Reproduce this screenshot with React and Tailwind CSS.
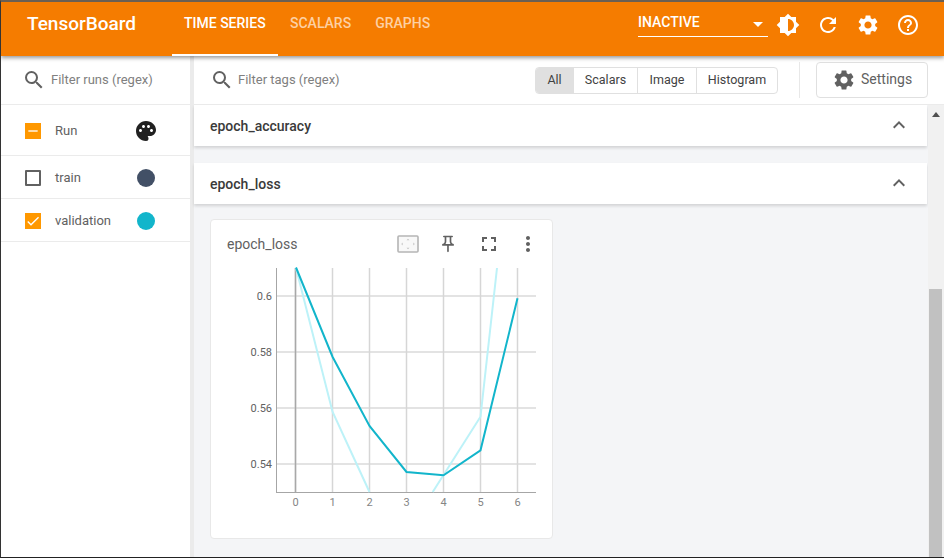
import React from "react";
import {
  MdSearch, MdSettings, MdRefresh, MdHelpOutline, MdBrightness6, MdPalette, MdExpandLess,
  MdOutlinePushPin, MdFullscreen, MdMoreVert, MdCheck, MdRemove,
} from "react-icons/md";

const Row = ({ h, box, label, right }) => (
  <div className={`flex items-center pl-[24px] pt-[2px] ${h} border-b border-[#ebebeb]`}>
    {box}
    <span className="ml-[14px] w-[82px] text-[13px] text-[#616161]">{label}</span>
    {right}
  </div>
);

const Seg = ({ w, active, children, last }) => (
  <div
    className={`flex items-center justify-center h-full text-[12.5px] text-[#424242] ${w} ${active ? "bg-[#e0e0e0]" : ""} ${last ? "" : "border-r border-[#e0e0e0]"}`}
  >
    {children}
  </div>
);

const Section = ({ title, className }) => (
  <div className={`flex items-center justify-between h-[41px] bg-white pl-[16px] pr-[16px] shadow-[0_2px_3px_rgba(0,0,0,0.14)] ${className}`}>
    <span className="pt-[2px] text-[14px] font-medium text-[#3a3a3a]">{title}</span>
    <MdExpandLess size={24} className="text-[#616161] -mt-[2px]" />
  </div>
);

const Chart = () => {
  const xs = [295.5, 332.5, 369.5, 406.5, 443.5, 480.5, 517.5];
  const ys = [[296, "0.6"], [352, "0.58"], [408, "0.56"], [464, "0.54"]];
  return (
    <svg width="341" height="270" viewBox="211 260 341 270" className="block" fontFamily="Roboto, sans-serif">
      {ys.map(([y]) => (
        <line key={y} x1="276" x2="536" y1={y} y2={y} stroke="#e3e3e3" strokeWidth="2" />
      ))}
      {xs.map((x) => (
        <line key={x} x1={x} x2={x} y1="268" y2="492" stroke="#d6d6d6" strokeWidth="1.5" />
      ))}
      <line x1="295.5" x2="295.5" y1="268" y2="492" stroke="#a8a8a8" strokeWidth="1.5" />
      <line x1="276.5" x2="276.5" y1="268" y2="492.5" stroke="#a6a6a6" strokeWidth="1" />
      <line x1="276" x2="536" y1="492.5" y2="492.5" stroke="#a6a6a6" strokeWidth="1" />
      {ys.map(([y, t]) => (
        <text key={t} x="272" y={y + 4} textAnchor="end" fontSize="11" fill="#616161">{t}</text>
      ))}
      {xs.map((x, i) => (
        <text key={i} x={x} y="506" textAnchor="middle" fontSize="11" fill="#858585">{i}</text>
      ))}
      <polyline points="296,268 332.5,411.7 369.5,492" fill="none" stroke="#bdf2f8" strokeWidth="2" />
      <polyline points="432.7,492 480.5,416.7 497,268" fill="none" stroke="#bdf2f8" strokeWidth="2" />
      <polyline
        points="296,267.5 332.5,356.7 369.5,426 406.5,472 443.5,475.3 480.5,450.3 517.5,298.3"
        fill="none"
        stroke="#12b5cb"
        strokeWidth="2"
      />
    </svg>
  );
};

const FitIcon = () => (
  <svg width="22" height="18" viewBox="0 0 22 18" fill="none">
    <rect x="1" y="1" width="20" height="16" rx="1" fill="#f8f8f8" stroke="#b5b5b5" strokeWidth="1.6" />
    <path d="M11 3.8l-1.5 1.5h3zM11 14.2l-1.5-1.5h3zM4.2 9l1.5-1.5v3zM17.8 9l-1.5-1.5v3z" fill="#c4c4c4" />
  </svg>
);

export default function App() {
  return (
    <div
      className="flex flex-col h-[558px] w-[944px] overflow-hidden border-l border-t-2 border-b border-l-[#333333] border-t-[#6a5f52] border-b-[#222222] bg-white"
      style={{ fontFamily: "Roboto, sans-serif" }}
    >
      <header className="relative z-10 flex items-center h-[54px] shrink-0 bg-[#f57c00] text-white shadow-[0_2px_4px_rgba(0,0,0,0.4)]">
        <div className="w-[171px] pl-[26px] pb-[9px] text-[19px] font-medium">TensorBoard</div>
        <nav className="flex h-full text-[14px] font-medium">
          <div className="flex items-center px-[12px] pb-[10px] border-b-2 border-white w-[106px]">TIME SERIES</div>
          <div className="flex items-center px-[12px] pb-[12px] text-[#fdd0a3]">SCALARS</div>
          <div className="flex items-center px-[12px] pb-[12px] text-[#fdd0a3]">GRAPHS</div>
        </nav>
        <div className="ml-auto mr-[16px] flex items-center">
          <div className="flex items-center justify-between w-[130px] h-[27px] mb-[11px] border-b border-white text-[14px] font-medium">
            <span className="mb-[1px]">INACTIVE</span>
            <span className="mr-[5px] mt-[2px] w-0 h-0 border-l-[5px] border-r-[5px] border-t-[5px] border-l-transparent border-r-transparent border-t-white" />
          </div>
          <div className="flex items-center mb-[8px]">
            <div className="w-[40px] flex justify-center"><MdBrightness6 size={24} /></div>
            <div className="w-[40px] flex justify-center"><MdRefresh size={24} /></div>
            <div className="w-[40px] flex justify-center"><MdSettings size={24} /></div>
            <div className="w-[40px] flex justify-center"><MdHelpOutline size={24} /></div>
          </div>
        </div>
      </header>

      <div className="flex flex-1 min-h-0">
        <aside className="w-[189px] shrink-0 bg-white">
          <div className="flex items-center h-[49px] pl-[21px] border-b border-[#ebebeb]">
            <MdSearch size={24} className="text-[#616161] mr-[5px]" />
            <span className="text-[13px] text-[#808080]">Filter runs (regex)</span>
          </div>
          <Row
            h="h-[51px]"
            label="Run"
            box={<span className="flex items-center justify-center w-[16px] h-[16px] bg-[#ff9800] text-white"><MdRemove size={16} /></span>}
            right={<MdPalette size={24} className="text-[#212121] -ml-[3px]" />}
          />
          <Row
            h="h-[43px]"
            label="train"
            box={<span className="w-[16px] h-[16px] border-2 border-[#616161] rounded-[1px]" />}
            right={<span className="w-[18px] h-[18px] rounded-full bg-[#425066]" />}
          />
          <Row
            h="h-[43px]"
            label="validation"
            box={<span className="flex items-center justify-center w-[16px] h-[16px] bg-[#ff9800] text-white"><MdCheck size={16} /></span>}
            right={<span className="w-[18px] h-[18px] rounded-full bg-[#12b5cb]" />}
          />
        </aside>
        <div className="w-[4px] shrink-0 bg-[#ebebeb]" />

        <main className="flex flex-col flex-1 min-w-0">
          <div className="flex items-center h-[49px] shrink-0 bg-white border-b border-[#ebebeb] pl-[16px] pr-[16px]">
            <MdSearch size={24} className="text-[#616161] mr-[4px]" />
            <span className="text-[13px] text-[#808080]">Filter tags (regex)</span>
            <div className="ml-auto flex h-[27px] border border-[#e0e0e0] rounded-[4px] overflow-hidden">
              <Seg w="w-[38px]" active>All</Seg>
              <Seg w="w-[64px]">Scalars</Seg>
              <Seg w="w-[59px]">Image</Seg>
              <Seg w="w-[80px]" last>Histogram</Seg>
            </div>
            <div className="w-px h-[36px] bg-[#e8e8e8] ml-[21px] mr-[16px]" />
            <div className="flex items-center w-[112px] h-[36px] pl-[15px] pb-[2px] border border-[#e0e0e0] rounded-[4px] text-[14px] text-[#616161]">
              <MdSettings size={24} className="mr-[5px] mt-[2px]" />
              <span>Settings</span>
            </div>
          </div>

          <div className="flex flex-1 min-h-0">
            <div className="flex-1 min-w-0 bg-[#f4f5f7]">
              <Section title="epoch_accuracy" className="mr-px" />
              <Section title="epoch_loss" className="mr-px mt-[17px]" />
              <div className="mt-[15px] ml-[16px] w-[343px] h-[320px] bg-white border border-[#e8e8e8] rounded-[4px]">
                <div className="flex items-center h-[40px] pl-[16px] pt-[8px] text-[14px] text-[#616161]">
                  <span className="w-[170px]">epoch_loss</span>
                  <FitIcon />
                  <div className="ml-[18px] flex w-[22px] justify-center"><MdOutlinePushPin size={20} className="text-[#616161]" /></div>
                  <div className="ml-[18px] flex w-[24px] justify-center"><MdFullscreen size={26} className="text-[#616161]" /></div>
                  <div className="ml-[15px] flex w-[24px] justify-center"><MdMoreVert size={24} className="text-[#616161]" /></div>
                </div>
                <Chart />
              </div>
            </div>
            <div className="w-[16px] shrink-0 bg-[#f1f1f1] flex flex-col justify-between items-center">
              <span className="mt-[7px] w-0 h-0 border-l-[4px] border-r-[4px] border-b-[5px] border-l-transparent border-r-transparent border-b-[#505050]" />
              <div className="self-start ml-[1px] w-[13px] h-[268px] bg-[#c1c1c1]" />
            </div>
          </div>
        </main>
      </div>
    </div>
  );
}
